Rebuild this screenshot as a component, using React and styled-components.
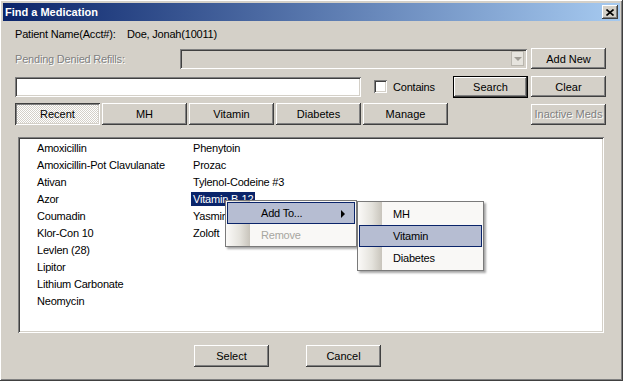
import React from "react";
import styled, { createGlobalStyle, css } from "styled-components";

const GlobalStyle = createGlobalStyle`
  * {
    box-sizing: border-box;
    margin: 0;
    padding: 0;
  }
  body {
    background: #d4d0c8;
    font-family: "Liberation Sans", Arial, sans-serif;
    font-size: 11px;
    color: #000;
  }
`;

// win2k style bevels
const raised = css`
  box-shadow: inset -1px -1px #404040, inset 1px 1px #ffffff,
    inset -2px -2px #808080, inset 2px 2px #d4d0c8;
`;

const sunken = css`
  box-shadow: inset 1px 1px #808080, inset -1px -1px #ffffff,
    inset 2px 2px #404040, inset -2px -2px #d4d0c8;
`;

const Window = styled.div`
  position: relative;
  width: 623px;
  height: 381px;
  padding: 3px;
  display: flex;
  flex-direction: column;
  background: #d4d0c8;
  ${raised};
`;

const TitleBar = styled.div`
  height: 18px;
  display: flex;
  align-items: center;
  justify-content: space-between;
  padding: 0 2px 0 2px;
  background: linear-gradient(to right, #0a246a, #a6caf0);
  color: #fff;
  font-weight: bold;
  font-size: 11px;
`;

const CloseBtn = styled.div`
  width: 16px;
  height: 14px;
  display: flex;
  align-items: center;
  justify-content: center;
  background: #d4d0c8;
  ${raised};
`;

const Body = styled.div`
  flex: 1;
  display: flex;
  flex-direction: column;
  padding: 0 14px 0 12px;
`;

const Row = styled.div`
  display: flex;
  align-items: ${(p) => p.$align || "center"};
  height: ${(p) => p.$h}px;
  margin-top: ${(p) => p.$mt || 0}px;
  gap: ${(p) => p.$gap || 0}px;
`;

const Label = styled.span`
  letter-spacing: -0.2px;
  white-space: nowrap;
  width: ${(p) => (p.$w ? p.$w + "px" : "auto")};
  ${(p) =>
    p.$disabled &&
    css`
      color: #808080;
      text-shadow: 1px 1px #ffffff;
    `}
`;

const Button = styled.div`
  width: ${(p) => p.$w || 75}px;
  height: ${(p) => p.$h || 21}px;
  display: flex;
  align-items: center;
  justify-content: center;
  flex-shrink: 0;
  background: #d4d0c8;
  ${raised};
  margin-left: ${(p) => (p.$push ? "auto" : p.$ml ? p.$ml + "px" : "0")};
  ${(p) =>
    p.$default &&
    css`
      border: 1px solid #000;
    `}
  ${(p) =>
    p.$disabled &&
    css`
      color: #808080;
      text-shadow: 1px 1px #ffffff;
    `}
  ${(p) =>
    p.$pressed &&
    css`
      background: repeating-conic-gradient(#ffffff 0 25%, #d4d0c8 0 50%) 0 0 / 2px 2px;
      box-shadow: inset 1px 1px #404040, inset -1px -1px #ffffff,
        inset 2px 2px #808080, inset -2px -2px #d4d0c8;
    `}
`;

const Combo = styled.div`
  width: 347px;
  height: 20px;
  margin-left: auto;
  display: flex;
  align-items: center;
  justify-content: flex-end;
  padding-right: 3px;
  background: #d4d0c8;
  ${sunken};
`;

const ComboArrow = styled.div`
  width: 13px;
  height: 15px;
  display: flex;
  align-items: center;
  justify-content: center;
  background: #e6e4de;
  border: 1px solid #b9b6ae;
  &::after {
    content: "";
    border-left: 4px solid transparent;
    border-right: 4px solid transparent;
    border-top: 4px solid #a09d96;
  }
`;

const TextInput = styled.div`
  width: 346px;
  height: 20px;
  margin-top: 1px;
  background: #fff;
  ${sunken};
`;

const CheckWrap = styled.div`
  display: flex;
  align-items: center;
  gap: 6px;
  margin-left: 13px;
  margin-top: 4px;
  height: 13px;
`;

const CheckBox = styled.div`
  width: 13px;
  height: 13px;
  background: #fff;
  ${sunken};
`;

const Tabs = styled.div`
  display: grid;
  grid-template-columns: repeat(5, 85px);
  gap: 2px;
`;

const ListBox = styled.div`
  height: 196px;
  margin: 12px 2px 0 3px;
  padding: 2px 0 0 17px;
  background: #fff;
  ${sunken};
  display: grid;
  grid-template-columns: 156px 156px;
  grid-template-rows: repeat(10, 17px);
  grid-auto-flow: column;
  align-content: start;
`;

const Item = styled.div`
  display: flex;
  align-items: center;
`;

const ItemText = styled.span`
  padding: 1px 2px;
  letter-spacing: -0.2px;
  white-space: nowrap;
  ${(p) =>
    p.$selected &&
    css`
      background: #0a246a;
      color: #fff;
    `}
`;

const Footer = styled.div`
  display: flex;
  gap: 37px;
  margin-top: 12px;
  padding-left: 179px;
`;

// popup menus over the list
const Menu = styled.div`
  position: absolute;
  left: ${(p) => p.$x}px;
  top: ${(p) => p.$y}px;
  width: ${(p) => p.$w}px;
  padding: 1px 1px ${(p) => p.$pb || 0}px;
  border: 1px solid #7a7a7a;
  background: linear-gradient(
      to right,
      #fbfaf8 0px,
      #e4e2dc 14px,
      #c8c4bb 24px,
      #f9f8f6 24px
    );
  box-shadow: 2px 2px 2px rgba(0, 0, 0, 0.35);
`;

const MenuItem = styled.div`
  position: relative;
  height: 22px;
  display: flex;
  align-items: center;
  padding-left: 33px;
  border: 1px solid transparent;
  letter-spacing: -0.2px;
  ${(p) =>
    p.$active &&
    css`
      background: #b6bdd2;
      border-color: #0a246a;
    `}
  ${(p) =>
    p.$disabled &&
    css`
      color: #a7a6a0;
    `}
`;

const SubArrow = styled.span`
  position: absolute;
  right: 9px;
  top: 7px;
  border-top: 4px solid transparent;
  border-bottom: 4px solid transparent;
  border-left: 4px solid #000;
`;

const meds = [
  "Amoxicillin",
  "Amoxicillin-Pot Clavulanate",
  "Ativan",
  "Azor",
  "Coumadin",
  "Klor-Con 10",
  "Levlen (28)",
  "Lipitor",
  "Lithium Carbonate",
  "Neomycin",
  "Phenytoin",
  "Prozac",
  "Tylenol-Codeine #3",
  "Vitamin B-12",
  "Yasmin",
  "Zoloft",
];

const tabs = ["Recent", "MH", "Vitamin", "Diabetes", "Manage"];

const App = () => {
  return (
    <>
      <GlobalStyle />
      <Window>
        <TitleBar>
          <span>Find a Medication</span>
          <CloseBtn>
            <svg width="8" height="7" viewBox="0 0 8 7">
              <path d="M0.5 0.5 L7.5 6.5 M7.5 0.5 L0.5 6.5" stroke="#000" strokeWidth="1.6" />
            </svg>
          </CloseBtn>
        </TitleBar>

        <Body>
          <Row $h={26}>
            <Label $w={112}>Patient Name(Acct#):</Label>
            <Label>Doe, Jonah(10011)</Label>
          </Row>

          <Row $h={21} $mt={1} $gap={4}>
            <Label $disabled>Pending Denied Refills:</Label>
            <Combo>
              <ComboArrow />
            </Combo>
            <Button>Add New</Button>
          </Row>

          <Row $h={22} $mt={7} $align="flex-start">
            <TextInput />
            <CheckWrap>
              <CheckBox />
              <Label>Contains</Label>
            </CheckWrap>
            <Button $push $default $h={22}>
              Search
            </Button>
            <Button $ml={3}>Clear</Button>
          </Row>

          <Row $h={22} $mt={5}>
            <Tabs>
              {tabs.map((t) => (
                <Button key={t} $w={85} $h={22} $pressed={t === "Recent"}>
                  {t}
                </Button>
              ))}
            </Tabs>
            <Button $push $disabled>
              Inactive Meds
            </Button>
          </Row>

          <ListBox>
            {meds.map((m) => (
              <Item key={m}>
                <ItemText $selected={m === "Vitamin B-12"}>{m}</ItemText>
              </Item>
            ))}
          </ListBox>

          <Footer>
            <Button $h={22}>Select</Button>
            <Button $h={22}>Cancel</Button>
          </Footer>
        </Body>

        <Menu $x={225} $y={200} $w={132}>
          <MenuItem $active>
            Add To...
            <SubArrow />
          </MenuItem>
          <MenuItem $disabled>Remove</MenuItem>
        </Menu>

        <Menu $x={357} $y={201} $w={127} $pb={1}>
          <MenuItem>MH</MenuItem>
          <MenuItem $active>Vitamin</MenuItem>
          <MenuItem>Diabetes</MenuItem>
        </Menu>
      </Window>
    </>
  );
};

export default App;
